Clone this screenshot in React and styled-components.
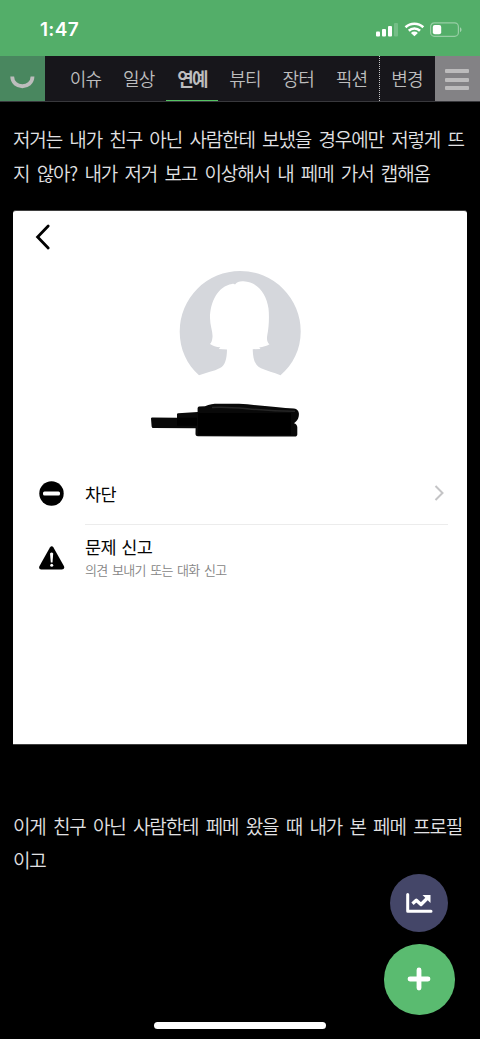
import styled, { createGlobalStyle } from "styled-components";

const GlobalStyle = createGlobalStyle`
  * {
    box-sizing: border-box;
  }
  body {
    margin: 0;
    background: #000000;
    font-family: "Noto Sans CJK KR", "Liberation Sans", sans-serif;
  }
`;

const Screen = styled.div`
  position: relative;
  width: 480px;
  height: 1039px;
  overflow: hidden;
  background: #000000;
`;

const StatusBar = styled.div`
  display: flex;
  align-items: center;
  justify-content: space-between;
  height: 56px;
  padding: 4px 17px 0 40px;
  background: #53ae69;
`;

const Time = styled.div`
  font-family: Inter, sans-serif;
  font-size: 19px;
  font-weight: 600;
  line-height: 24px;
  letter-spacing: 0.3px;
  color: #ffffff;
`;

const Nav = styled.nav`
  display: flex;
  height: 46px;
  background: #17161b;
  border-bottom: 1px solid #38383c;
`;

const Logo = styled.div`
  display: flex;
  align-items: center;
  justify-content: center;
  width: 45px;
  padding-top: 6px;
  background: #49875f;
`;

const Tabs = styled.div`
  display: flex;
  flex: 1;
  padding-left: 15px;
`;

const Tab = styled.div`
  display: flex;
  justify-content: center;
  flex: 1;
  margin: 0 2px 0 0;
  border-bottom: 1.5px solid ${({ $active }) => ($active ? "#55c463" : "transparent")};
  font-size: 18px;
  font-weight: ${({ $active }) => ($active ? 700 : 350)};
  line-height: 44px;
  letter-spacing: ${({ $active }) => ($active ? "-1.8px" : "-0.8px")};
  white-space: nowrap;
  color: #bdbdbe;
`;

const EditTab = styled(Tab)`
  flex: none;
  width: 56px;
  margin: 0;
  padding-right: 1px;
  border-bottom: none;
  border-left: 1px dotted #c6c6c8;
`;

const MenuButton = styled.div`
  display: flex;
  flex-direction: column;
  align-items: center;
  justify-content: center;
  gap: 4.5px;
  width: 45px;
  padding: 2px 1px 0 0;
  background: #838285;
`;

const MenuLine = styled.div`
  width: 24px;
  height: 4px;
  border-radius: 1px;
  background: #bcbbbc;
`;

const Article = styled.main`
  padding: 20px 13px 0;
`;

const Paragraph = styled.p`
  margin: 0;
  font-size: 19px;
  font-weight: 350;
  line-height: 34.4px;
  letter-spacing: -1.13px;
  word-spacing: 4.2px;
  white-space: nowrap;
  color: #e2e2e4;
`;

const Photo = styled.section`
  height: 535px;
  margin: 19px 0 64px;
  border: 1px solid #3f3f3f;
  border-width: 1px 0;
  border-radius: 3px 3px 0 0;
  background: #ffffff;
`;

const BackRow = styled.div`
  height: 59px;
  padding: 13px 0 0 22px;
`;

const Profile = styled.div`
  display: flex;
  flex-direction: column;
  align-items: center;
  height: 191px;
`;

const Scribble = styled.svg`
  margin: 27px 0 0 -30px;
`;

const Row = styled.div`
  display: flex;
  align-items: center;
  height: 64px;
  padding: 0 19px 0 26px;
`;

const RowIcon = styled.div`
  display: flex;
  width: 46px;
  padding-top: 2px;
`;

const RowBody = styled.div`
  display: flex;
  align-items: center;
  justify-content: space-between;
  flex: 1;
  height: 100%;
  padding-top: 2px;
  border-bottom: 1px solid ${({ $divider }) => ($divider ? "#ececec" : "transparent")};
`;

const RowTitle = styled.div`
  font-size: 17.5px;
  line-height: 25px;
  letter-spacing: -0.6px;
  word-spacing: 2px;
  color: #050505;
`;

const RowNote = styled.div`
  font-size: 13px;
  font-weight: 350;
  line-height: 21px;
  letter-spacing: -0.72px;
  word-spacing: 2.3px;
  color: #858585;
`;

const Fab = styled.button`
  position: absolute;
  left: ${({ $x }) => $x}px;
  top: ${({ $y }) => $y}px;
  display: flex;
  align-items: center;
  justify-content: center;
  width: ${({ $size }) => $size}px;
  height: ${({ $size }) => $size}px;
  padding: 0;
  border: none;
  border-radius: 50%;
  background: ${({ $color }) => $color};
`;

const HomeIndicator = styled.div`
  position: absolute;
  left: 154px;
  bottom: 10.5px;
  width: 172px;
  height: 6.5px;
  border-radius: 4px;
  background: #ffffff;
`;

const categories = ["이슈", "일상", "연예", "뷰티", "장터", "픽션"];

const StatusIcons = () => (
  <svg width="87" height="16" viewBox="0 0 87 16" fill="#ffffff">
    <rect x="0" y="9.5" width="4" height="5" rx="1" />
    <rect x="6" y="7" width="4" height="7.5" rx="1" />
    <rect x="12" y="4" width="4" height="10.5" rx="1" />
    <rect x="18" y="1" width="4" height="13.5" rx="1" opacity="0.2" />
    <g fill="none" stroke="#ffffff" strokeWidth="2.6">
      <path d="M29.5 5.2a13 13 0 0 1 17.8 0" />
      <path d="M32.8 8.8a8 8 0 0 1 11.2 0" />
    </g>
    <path d="M38.4 14.3 34.9 11a5 5 0 0 1 7 0Z" />
    <rect x="54.6" y="0.9" width="27.8" height="13.4" rx="3.8" fill="none" stroke="#ffffff" strokeOpacity="0.4" strokeWidth="1.2" />
    <rect x="56.8" y="3" width="8.4" height="9.2" rx="2" />
    <path d="M84 5.2c2 .8 2 4 0 4.8Z" opacity="0.45" />
  </svg>
);

const Avatar = () => (
  <svg width="122" height="106" viewBox="0 0 122 106">
    <path
      fill="#d5d7dc"
      d="M20 105.2C8 94.5 .7 79.5 .7 61.5a60.5 60.5 0 0 1 121 0c0 18-7.700 33-20.200 43.700C94.5 102.3 88 101 82 98.2 75.500 95.500 74 88.500 73.700 79.200l7.800-.3-1.300-1.500c4-.3 7.400-1.400 10.300-3.100-2.300-1.700-3-5-2.200-9.300C89.700 58 90.500 47 89.500 38.500 87.500 24 79 12 64.500 11.300c-4-.2-6.500.5-8.500 3.200-.8-.8-1.500-.8-3-.6C39 16 31 32 31 48c0 8 3.500 15 2.300 20.500-.3 2.500-1 4.300-2.300 5.500 2.800 2 6 3 10.300 3.300l-1.500 1.800 8.200.3c-.2 10-2 15.800-7 18.700-6 3.300-14 4.600-21 7.100Z"
    />
  </svg>
);

const NameScribble = () => (
  <Scribble width="150" height="36" viewBox="0 0 150 36">
    <path
      fill="#090909"
      d="M1 15.500Q1 14.500 2.200 14.500L27 14.800V11.200q0-1 1.200-1L47.600 9V5Q48 3.500 49 3.500L55 3.200C60 1 64 .6 70 .7l19 .1C108 2 130 5 144 5.500c3 .4 4.800 2.500 4.900 5 .2 3-.7 6-2.900 8l-2 1.700c2 .5 3.300 2 3.300 4.100v7.200c0 1.300-1 2-2.300 2.100L48 33.200c-2 0-2.500-1.100-2.500-2.500l.1-5.500L3.500 25.100C2 25.100 1.500 24 1.500 22Z"
    />
    <path d="M27 14.800h20v8H27M48 10h93v22H48Z" fill="#000000" />
    <path d="M62 4.500C85 2.500 105 8.500 145 8.200" fill="none" stroke="#262626" strokeWidth="1.500" />
  </Scribble>
);

const BlockIcon = () => (
  <svg width="25" height="25" viewBox="0 0 25 25">
    <circle cx="12.500" cy="12.500" r="12.200" />
    <rect x="4" y="10.500" width="17" height="4" rx="1.500" fill="#ffffff" />
  </svg>
);

const WarningIcon = () => (
  <svg width="26" height="24" viewBox="0 0 26 24">
    <path d="M10.900 1.400Q12.700-.8 14.500 1.400L25 20.300Q26 23.400 22.800 23.500H2.200Q-.6 23.400.4 20.300Z" />
    <path d="M11 7.500Q12.700 5.500 14.200 7.500L13.500 16.500H11.800Z" fill="#ffffff" />
    <circle cx="12.700" cy="19.300" r="1.500" fill="#ffffff" />
  </svg>
);

export default function App() {
  return (
    <Screen>
      <GlobalStyle />
      <StatusBar>
        <Time>1:47</Time>
        <StatusIcons />
      </StatusBar>
      <Nav>
        <Logo>
          <svg width="25" height="14" viewBox="0 0 25 14">
            <path d="M2.200 1.500C2.400 14.500 22.300 14.500 22.500 1.500" fill="none" stroke="#bdbdbd" strokeWidth="3.800" />
          </svg>
        </Logo>
        <Tabs>
          {categories.map((name) => (
            <Tab key={name} $active={name === "연예"}>
              {name}
            </Tab>
          ))}
        </Tabs>
        <EditTab>변경</EditTab>
        <MenuButton>
          <MenuLine />
          <MenuLine />
          <MenuLine />
        </MenuButton>
      </Nav>
      <Article>
        <Paragraph>
          저거는 내가 친구 아닌 사람한테 보냈을 경우에만 저렇게 뜨
          <br />
          지 않아? 내가 저거 보고 이상해서 내 페메 가서 캡해옴
        </Paragraph>
        <Photo>
          <BackRow>
            <svg width="16" height="26" viewBox="0 0 16 26" fill="none" stroke="#000000" strokeWidth="2.800">
              <path d="M13.200 2 2.600 13 13.200 24" strokeLinecap="round" />
            </svg>
          </BackRow>
          <Profile>
            <Avatar />
            <NameScribble />
          </Profile>
          <Row>
            <RowIcon>
              <BlockIcon />
            </RowIcon>
            <RowBody $divider>
              <RowTitle>차단</RowTitle>
              <svg width="14" height="18" viewBox="0 0 14 18" fill="none" stroke="#c4c4c6" strokeWidth="2">
                <path d="M1.500 2 8.500 9 1.500 16" />
              </svg>
            </RowBody>
          </Row>
          <Row>
            <RowIcon>
              <WarningIcon />
            </RowIcon>
            <RowBody>
              <div>
                <RowTitle>문제 신고</RowTitle>
                <RowNote>의견 보내기 또는 대화 신고</RowNote>
              </div>
            </RowBody>
          </Row>
        </Photo>
        <Paragraph>
          이게 친구 아닌 사람한테 페메 왔을 때 내가 본 페메 프로필
          <br />
          이고
        </Paragraph>
      </Article>
      <Fab $x={390} $y={874} $size={58} $color="#444668">
        <svg width="27" height="21" viewBox="0 0 27 21" fill="none" stroke="#ffffff" strokeWidth="3">
          <path d="M1.700 1.500V18.300H25" strokeLinecap="round" strokeLinejoin="round" />
          <path d="M6.500 10.800 10.300 7.300 15 11.500 21 5.500" strokeWidth="3.400" strokeLinejoin="round" />
          <path d="M16.500 2H24.500V10Z" fill="#ffffff" stroke="none" />
        </svg>
      </Fab>
      <Fab $x={384} $y={944} $size={70.5} $color="#5abb70">
        <svg width="24" height="24" viewBox="0 0 24 24" stroke="#ffffff" strokeWidth="4.800" strokeLinecap="round">
          <path d="M12 3V21M3 12H21" />
        </svg>
      </Fab>
      <HomeIndicator />
    </Screen>
  );
}
